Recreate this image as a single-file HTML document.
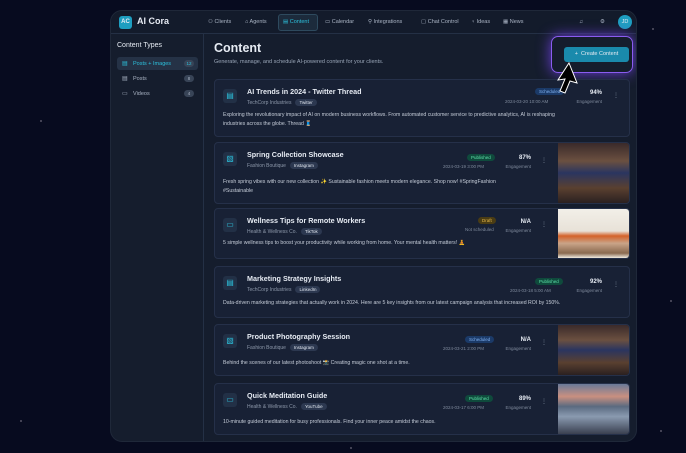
<!DOCTYPE html>
<html><head><meta charset="utf-8"><style>
*{box-sizing:border-box;margin:0;padding:0}
body{width:686px;height:453px;overflow:hidden;background:#070b1f;font-family:"Liberation Sans",sans-serif;color:#e6ebf3;position:relative}
.star{position:absolute;width:2px;height:2px;background:#556;border-radius:50%}
.app{position:absolute;left:110px;top:10px;width:527px;height:432px;background:#151d2d;border-radius:12px;overflow:hidden;border:1px solid #1f2839}
.top{position:absolute;left:0;top:0;right:0;height:23px;border-bottom:1px solid #243045;background:#131b2b}
.logo{position:absolute;left:8px;top:5px;width:13px;height:13px;background:#1e9ec0;border-radius:3px;font-size:6px;font-weight:bold;text-align:center;line-height:13px}
.brand{position:absolute;left:26px;top:5px;font-size:9px;font-weight:bold}
.nav{position:absolute;top:8px;font-size:5.5px;color:#aab4c4;white-space:nowrap}
.navact{position:absolute;left:167px;top:3px;width:40px;height:17px;border:1px solid #2e4a5e;background:#1c2b3c;border-radius:3px}
.side{position:absolute;left:0;top:23px;width:93px;bottom:0;border-right:1px solid #243045}
.side h4{position:absolute;left:6px;top:8px;font-size:7px;font-weight:normal}
.si{position:absolute;left:6px;width:81px;height:13px;font-size:5.5px;color:#aab4c4;padding:4px 0 0 16px;border-radius:3px}
.si i{position:absolute;left:5px;top:3px;font-style:normal;font-size:6px}
.si .c{position:absolute;right:4px;top:3px;width:10px;height:7px;background:#384457;border-radius:4px;font-size:4.5px;text-align:center;line-height:7px}
h1{position:absolute;left:103px;top:30px;font-size:12.5px}
.sub{position:absolute;left:103px;top:48px;font-size:5.5px;color:#9aa6b8}
.card{position:absolute;left:103px;width:416px;background:#182135;border:1px solid #253049;border-radius:4px;overflow:hidden}
.ic{position:absolute;left:8px;top:9px;width:14px;height:14px;background:#223046;border-radius:3px;color:#2cc0dc;font-size:8px;text-align:center;line-height:14px}
.tt{position:absolute;left:32px;top:7px;font-size:7.2px;font-weight:bold}
.cl{position:absolute;left:32px;top:19px;font-size:5px;color:#8d98aa}
.tag{display:inline-block;margin-left:4px;background:#2c3850;color:#dfe5ee;border-radius:4px;padding:1px 4px;font-size:4.5px}
.desc{position:absolute;left:8px;font-size:5.2px;color:#c5ccd8;line-height:9px}
.st{position:absolute;font-size:4.5px;padding:1px 4px;border-radius:4px}
.pub{background:#0f4a3c;color:#5ce0a8}.sch{background:#1b3a68;color:#7fb0f0}.dr{background:#4a3c14;color:#e6b84a}
.dt{position:absolute;font-size:4.5px;color:#7f8a9c;text-align:right}
.pc{position:absolute;font-size:6px;font-weight:bold;text-align:right;width:30px}
.en{position:absolute;font-size:4.5px;color:#7f8a9c;width:30px;text-align:right}
.dot{position:absolute;font-size:6px;color:#7f8a9c}
.img{position:absolute;right:0;top:0;bottom:0;width:71px}
</style></head><body>
<div class="star" style="left:652px;top:28px"></div><div class="star" style="left:40px;top:120px"></div><div class="star" style="left:670px;top:300px"></div><div class="star" style="left:20px;top:420px"></div><div class="star" style="left:660px;top:430px"></div><div class="star" style="left:350px;top:447px"></div>
<div class="app">
<div class="top">
<div class="logo">AC</div><div class="brand">AI Cora</div>
<div class="navact"></div>
<div class="nav" style="left:97px">⚇ Clients</div>
<div class="nav" style="left:134px">⌂ Agents</div>
<div class="nav" style="left:172px;color:#2cc0dc">▤ Content</div>
<div class="nav" style="left:214px">▭ Calendar</div>
<div class="nav" style="left:257px">⚲ Integrations</div>
<div class="nav" style="left:310px">▢ Chat Control</div>
<div class="nav" style="left:360px">♀ Ideas</div>
<div class="nav" style="left:392px">▦ News</div>
<div class="nav" style="left:468px">♫</div><div class="nav" style="left:489px">⚙</div>
<div style="position:absolute;left:507px;top:4px;width:14px;height:14px;border-radius:50%;background:#1e9ec0;font-size:5.5px;text-align:center;line-height:14px">JD</div>
</div>
<div class="side"><h4>Content Types</h4>
<div class="si" style="top:23px;background:#253246;color:#2cc0dc"><i>▤</i>Posts + Images<span class="c">12</span></div>
<div class="si" style="top:38px"><i>▤</i>Posts<span class="c">8</span></div>
<div class="si" style="top:53px"><i>▭</i>Videos<span class="c">4</span></div>
</div>
<h1>Content</h1>
<div class="sub">Generate, manage, and schedule AI-powered content for your clients.</div>
<div style="position:absolute;left:440px;top:25px;width:82px;height:37px;border:1px solid #8a5cf0;border-radius:7px;box-shadow:0 0 14px #6b3fd8"></div>
<div style="position:absolute;left:453px;top:36px;width:65px;height:15px;background:#1a8aac;border-radius:3px;font-size:5.5px;text-align:center;line-height:15px">+ &nbsp;Create Content</div>

<div class="card" style="top:68px;height:58px"><div class="ic">▤</div><div class="tt">AI Trends in 2024 - Twitter Thread</div><div class="cl">TechCorp Industries<span class="tag">Twitter</span></div>
<div class="st sch" style="left:320px;top:8px">Scheduled</div><div class="dt" style="left:290px;top:19px">2024-03-20 10:00 AM</div>
<div class="pc" style="left:357px;top:10px">94%</div><div class="en" style="left:357px;top:19px">Engagement</div><div class="dot" style="left:398px;top:12px">⋮</div>
<div class="desc" style="top:31px">Exploring the revolutionary impact of AI on modern business workflows. From automated customer service to predictive analytics, AI is reshaping<br>industries across the globe. Thread 🧵</div></div>

<div class="card" style="top:131px;height:62px"><div class="ic">▧</div><div class="tt">Spring Collection Showcase</div><div class="cl">Fashion Boutique<span class="tag">Instagram</span></div>
<div class="st pub" style="left:252px;top:11px">Published</div><div class="dt" style="left:228px;top:21px">2024-03-19 3:00 PM</div>
<div class="pc" style="left:286px;top:12px">87%</div><div class="en" style="left:286px;top:21px">Engagement</div><div class="dot" style="left:326px;top:14px">⋮</div>
<div class="desc" style="top:35px">Fresh spring vibes with our new collection ✨ Sustainable fashion meets modern elegance. Shop now! #SpringFashion<br>#Sustainable</div>
<div class="img" style="background:linear-gradient(180deg,#3a2a2a 0%,#6b5040 30%,#2a3560 50%,#5a4030 75%,#2a2020 100%)"></div></div>

<div class="card" style="top:197px;height:51px"><div class="ic">▭</div><div class="tt">Wellness Tips for Remote Workers</div><div class="cl">Health &amp; Wellness Co.<span class="tag">TikTok</span></div>
<div class="st dr" style="left:263px;top:8px">Draft</div><div class="dt" style="left:250px;top:18px">Not scheduled</div>
<div class="pc" style="left:286px;top:10px">N/A</div><div class="en" style="left:286px;top:19px">Engagement</div><div class="dot" style="left:326px;top:12px">⋮</div>
<div class="desc" style="top:30px">5 simple wellness tips to boost your productivity while working from home. Your mental health matters! 🧘</div>
<div class="img" style="background:linear-gradient(180deg,#f2efe8 0%,#e8e2d8 45%,#d4622a 55%,#c9a488 70%,#8a6a50 90%,#f0ebe0 100%)"></div></div>

<div class="card" style="top:255px;height:52px"><div class="ic">▤</div><div class="tt">Marketing Strategy Insights</div><div class="cl">TechCorp Industries<span class="tag">LinkedIn</span></div>
<div class="st pub" style="left:320px;top:11px">Published</div><div class="dt" style="left:295px;top:21px">2024-03-18 5:00 AM</div>
<div class="pc" style="left:357px;top:12px">92%</div><div class="en" style="left:357px;top:21px">Engagement</div><div class="dot" style="left:398px;top:14px">⋮</div>
<div class="desc" style="top:32px">Data-driven marketing strategies that actually work in 2024. Here are 5 key insights from our latest campaign analysis that increased ROI by 150%.</div></div>

<div class="card" style="top:313px;height:52px"><div class="ic">▧</div><div class="tt">Product Photography Session</div><div class="cl">Fashion Boutique<span class="tag">Instagram</span></div>
<div class="st sch" style="left:250px;top:11px">Scheduled</div><div class="dt" style="left:228px;top:21px">2024-03-21 2:00 PM</div>
<div class="pc" style="left:286px;top:12px">N/A</div><div class="en" style="left:286px;top:21px">Engagement</div><div class="dot" style="left:326px;top:14px">⋮</div>
<div class="desc" style="top:34px">Behind the scenes of our latest photoshoot 📸 Creating magic one shot at a time.</div>
<div class="img" style="background:linear-gradient(180deg,#3a2a2a 0%,#6b5040 30%,#2a3560 50%,#5a4030 75%,#2a2020 100%)"></div></div>

<div class="card" style="top:372px;height:52px"><div class="ic">▭</div><div class="tt">Quick Meditation Guide</div><div class="cl">Health &amp; Wellness Co.<span class="tag">YouTube</span></div>
<div class="st pub" style="left:250px;top:11px">Published</div><div class="dt" style="left:228px;top:21px">2024-03-17 6:00 PM</div>
<div class="pc" style="left:286px;top:12px">89%</div><div class="en" style="left:286px;top:21px">Engagement</div><div class="dot" style="left:326px;top:14px">⋮</div>
<div class="desc" style="top:34px">10-minute guided meditation for busy professionals. Find your inner peace amidst the chaos.</div>
<div class="img" style="background:linear-gradient(180deg,#6a7a98 0%,#c99080 25%,#5a6a80 45%,#8a9ab0 65%,#3a4050 100%)"></div></div>
<svg style="position:absolute;left:440px;top:50px;z-index:10" width="30" height="36" viewBox="0 0 30 36"><path d="M18 2 L26 22 L19 20 L14 32 L9 30 L14 18 L7 19 Z" fill="#000" stroke="#fff" stroke-width="1"/></svg>
</div>
</body></html>
